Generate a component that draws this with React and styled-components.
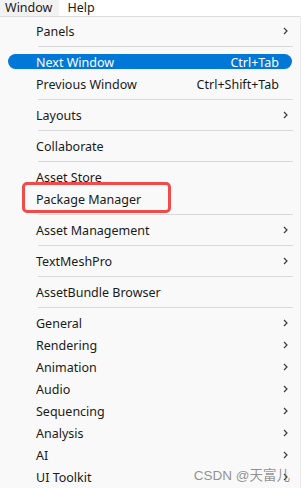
import React from 'react'
import styled, { createGlobalStyle } from 'styled-components'

const Global = createGlobalStyle`
  html, body {
    margin: 0;
    padding: 0;
    background: #ececec;
    overflow: hidden;
  }
  body {
    font-family: "Noto Sans", "Liberation Sans", sans-serif;
  }
`

const Page = styled.div`
  position: relative;
  width: 301px;
  height: 488px;
`

const MenuBar = styled.div`
  display: flex;
  height: 16px;
  background: #ffffff;
  font-size: 12.5px;
  color: #1a1a1a;
`

const BarItem = styled.div`
  display: flex;
  align-items: center;
  padding: 0 ${p => (p.$active ? '7px' : '8px')} 0 ${p => (p.$active ? '5px' : '8px')};
  background: ${p => (p.$active ? '#f2f2f2' : 'transparent')};
  line-height: 16px;
`

const Panel = styled.div`
  position: relative;
  width: 300px;
  box-sizing: border-box;
  background: #f9f9f9;
  border-top: 1px solid #dddddd;
  padding: 3px 0 2px;
`

const Item = styled.div`
  position: relative;
  display: flex;
  align-items: center;
  height: 22px;
  padding: 0 12px 0 36px;
  font-size: 12.5px;
  color: ${p => (p.$selected ? '#ffffff' : '#1a1a1a')};

  &::before {
    content: '';
    display: ${p => (p.$selected ? 'block' : 'none')};
    position: absolute;
    left: 8px;
    right: 8px;
    top: 3px;
    bottom: 4px;
    background: #0078d7;
    border-radius: 8px;
  }

  &::after {
    content: '';
    display: ${p => (p.$marked ? 'block' : 'none')};
    position: absolute;
    left: 22px;
    width: 149px;
    top: -6px;
    height: 31px;
    box-sizing: border-box;
    border: 3px solid #f2494a;
    border-radius: 5px;
  }
`

const Label = styled.span`
  position: relative;
  flex: 1;
  white-space: nowrap;
`

const Shortcut = styled.span`
  position: relative;
  white-space: nowrap;
`

const Arrow = styled.span`
  position: relative;
  display: flex;
  align-items: center;
  justify-content: flex-end;
  width: 9px;
`

const Separator = styled.div`
  height: 9px;
  display: flex;
  align-items: center;
  padding: 0 7px 0 38px;

  &::before {
    content: '';
    flex: 1;
    height: 1px;
    background: #d9d9d9;
  }
`

const Watermark = styled.div`
  position: absolute;
  right: 11px;
  bottom: 4px;
  font-size: 13.5px;
  color: rgba(110, 110, 110, 0.75);
  font-family: "Liberation Sans", "Noto Sans CJK SC", sans-serif;
`

const Chevron = () => (
  <svg width="5" height="8" viewBox="0 0 5 8">
    <polyline points="1,1 4,4 1,7" fill="none" stroke="#3c3c3c" strokeWidth="1.2" />
  </svg>
)

const menu = [
  { label: 'Panels', sub: true },
  'sep',
  { label: 'Next Window', shortcut: 'Ctrl+Tab', selected: true },
  { label: 'Previous Window', shortcut: 'Ctrl+Shift+Tab' },
  'sep',
  { label: 'Layouts', sub: true },
  'sep',
  { label: 'Collaborate' },
  'sep',
  { label: 'Asset Store' },
  { label: 'Package Manager', marked: true },
  'sep',
  { label: 'Asset Management', sub: true },
  'sep',
  { label: 'TextMeshPro', sub: true },
  'sep',
  { label: 'AssetBundle Browser' },
  'sep',
  { label: 'General', sub: true },
  { label: 'Rendering', sub: true },
  { label: 'Animation', sub: true },
  { label: 'Audio', sub: true },
  { label: 'Sequencing', sub: true },
  { label: 'Analysis', sub: true },
  { label: 'AI', sub: true },
  { label: 'UI Toolkit', sub: true },
]

const App = () => {
  return (
    <Page>
      <Global />
      <MenuBar>
        <BarItem $active>Window</BarItem>
        <BarItem>Help</BarItem>
      </MenuBar>
      <Panel>
        {menu.map((m, i) =>
          m === 'sep' ? (
            <Separator key={i} />
          ) : (
            <Item key={i} $selected={m.selected} $marked={m.marked}>
              <Label>{m.label}</Label>
              {m.shortcut && <Shortcut>{m.shortcut}</Shortcut>}
              <Arrow>{m.sub && <Chevron />}</Arrow>
            </Item>
          )
        )}
      </Panel>
      <Watermark>CSDN @天富儿</Watermark>
    </Page>
  )
}

export default App
